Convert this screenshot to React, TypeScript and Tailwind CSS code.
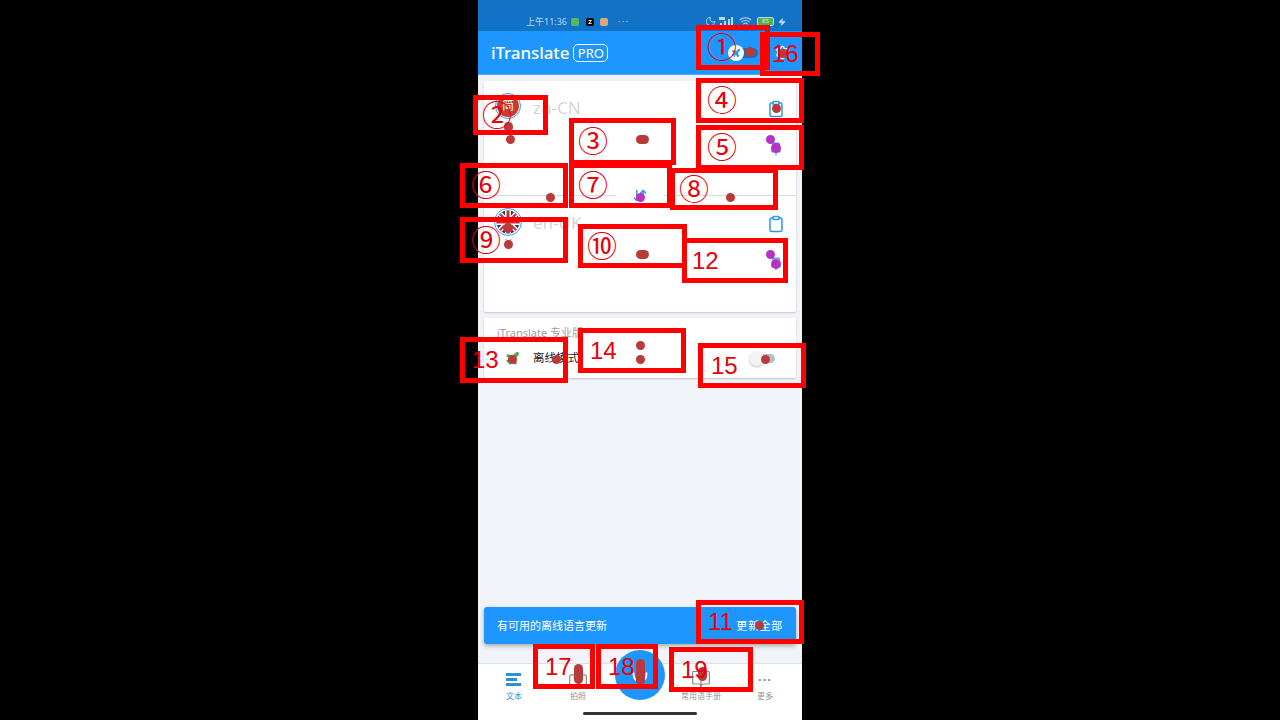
import { Camera, Clipboard, BookOpen, Mic, Plane, Settings, Moon, Wifi, Zap, ArrowDownUp, Pin, ChevronDown } from "lucide-react";

const font = { fontFamily: "'Noto Sans', 'Noto Sans CJK SC', sans-serif" };

// annotation boxes drawn over the screenshot
const boxes = [
  { label: "①", x: 696, y: 25, w: 74, h: 45, dx: 11, size: 30 },
  { label: "16", x: 760, y: 32, w: 60, h: 44, dx: 12, size: 24 },
  { label: "②", x: 473, y: 95, w: 75, h: 40, dx: 9, size: 30 },
  { label: "③", x: 569, y: 118, w: 107, h: 47, dx: 9, size: 30 },
  { label: "④", x: 696, y: 78, w: 108, h: 45, dx: 11, size: 30 },
  { label: "⑤", x: 696, y: 125, w: 108, h: 45, dx: 11, size: 30 },
  { label: "⑥", x: 460, y: 163, w: 108, h: 45, dx: 11, size: 30 },
  { label: "⑦", x: 569, y: 163, w: 103, h: 45, dx: 9, size: 30 },
  { label: "⑧", x: 670, y: 168, w: 108, h: 42, dx: 9, size: 30 },
  { label: "⑨", x: 460, y: 217, w: 108, h: 46, dx: 11, size: 30 },
  { label: "⑩", x: 578, y: 224, w: 109, h: 44, dx: 9, size: 30 },
  { label: "12", x: 682, y: 238, w: 106, h: 45, dx: 10, size: 24 },
  { label: "13", x: 460, y: 337, w: 108, h: 46, dx: 12, size: 24 },
  { label: "14", x: 578, y: 328, w: 108, h: 45, dx: 12, size: 24 },
  { label: "15", x: 698, y: 343, w: 108, h: 45, dx: 13, size: 24 },
  { label: "11", x: 696, y: 600, w: 108, h: 44, dx: 12, size: 24 },
  { label: "17", x: 533, y: 644, w: 62, h: 45, dx: 12, size: 24 },
  { label: "18", x: 596, y: 644, w: 62, h: 45, dx: 12, size: 24 },
  { label: "19", x: 669, y: 647, w: 84, h: 45, dx: 12, size: 24 },
];

const dots = [
  { x: 750, y: 52, w: 10, h: 10, c: "#b83b3b" },
  { x: 783, y: 53, w: 10, h: 9, c: "#b83b3b" },
  { x: 508, y: 127, w: 9, h: 10, c: "#b83b3b" },
  { x: 510, y: 139, w: 9, h: 9, c: "#b83b3b" },
  { x: 642, y: 139, w: 13, h: 9, c: "#b83b3b" },
  { x: 776, y: 108, w: 9, h: 9, c: "#b83b3b" },
  { x: 770, y: 139, w: 9, h: 9, c: "#b833c4" },
  { x: 776, y: 148, w: 10, h: 10, c: "#b833c4" },
  { x: 550, y: 197, w: 9, h: 9, c: "#b83b3b" },
  { x: 640, y: 197, w: 9, h: 9, c: "#b833c4" },
  { x: 730, y: 197, w: 9, h: 9, c: "#b83b3b" },
  { x: 508, y: 228, w: 10, h: 10, c: "#b83b3b" },
  { x: 508, y: 244, w: 9, h: 9, c: "#b83b3b" },
  { x: 642, y: 254, w: 13, h: 9, c: "#b83b3b" },
  { x: 770, y: 254, w: 9, h: 9, c: "#b833c4" },
  { x: 776, y: 264, w: 10, h: 10, c: "#b833c4" },
  { x: 512, y: 359, w: 9, h: 9, c: "#b83b3b" },
  { x: 556, y: 359, w: 9, h: 9, c: "#b83b3b" },
  { x: 640, y: 345, w: 9, h: 9, c: "#b83b3b" },
  { x: 640, y: 359, w: 9, h: 9, c: "#b83b3b" },
  { x: 765, y: 359, w: 9, h: 9, c: "#b83b3b" },
  { x: 759, y: 625, w: 9, h: 9, c: "#b83b3b" },
  { x: 578, y: 674, w: 9, h: 20, c: "#b83b3b" },
  { x: 640, y: 672, w: 9, h: 26, c: "#b83b3b" },
  { x: 702, y: 674, w: 9, h: 14, c: "#b83b3b" },
];

function ChinaBadge() {
  return (
    <div className="w-[26px] h-[26px] rounded-full border border-[#3b9be8] flex items-center justify-center">
      <div className="w-[22px] h-[22px] rounded-full bg-[#c63d30] text-white text-[12px] leading-[22px] text-center">简</div>
    </div>
  );
}

function UkFlag() {
  return (
    <svg width="28" height="28" viewBox="0 0 28 28">
      <defs>
        <clipPath id="uk"><circle cx="14" cy="14" r="11.5" /></clipPath>
      </defs>
      <circle cx="14" cy="14" r="13.5" fill="#fff" stroke="#3b9be8" />
      <g clipPath="url(#uk)">
        <rect width="28" height="28" fill="#27356e" />
        <path d="M0 0L28 28M28 0L0 28" stroke="#fff" strokeWidth="5" />
        <path d="M0 0L28 28M28 0L0 28" stroke="#c8303a" strokeWidth="2" />
        <path d="M14 0V28M0 14H28" stroke="#fff" strokeWidth="6" />
        <path d="M14 0V28M0 14H28" stroke="#c8303a" strokeWidth="3" />
      </g>
    </svg>
  );
}

function LangRow({ code, flag }: { code: string; flag: React.ReactNode }) {
  return (
    <div className="flex items-start justify-between pl-[10px] pr-[11px] pt-[12px]">
      <div className="flex items-start gap-[11px]">
        <div className="flex flex-col items-center w-[28px]">
          {flag}
          <ChevronDown size={11} strokeWidth={2} className="text-[#2f95e6] -mt-[1px]" />
        </div>
        <span className="text-[17px] leading-[28px] mt-[1px] text-[#d3d6da]">{code}</span>
      </div>
      <div className="flex flex-col items-center">
        <Clipboard size={18} strokeWidth={2} className="text-[#2f95e6] mt-[7px]" />
        <Pin size={14} strokeWidth={2} className="text-[#2f95e6] mt-[24px]" />
      </div>
    </div>
  );
}

function NavItem({ label, width, active, children }: { label: string; width: number; active?: boolean; children: React.ReactNode }) {
  return (
    <div className="flex flex-col items-center" style={{ width }}>
      <div className="h-[22px] flex items-center justify-center">{children}</div>
      <span className={`text-[8px] leading-[12px] ${active ? "text-[#2f8fd8]" : "text-[#8f959b]"}`}>{label}</span>
    </div>
  );
}

export default function App() {
  return (
    <div className="relative w-[1280px] h-[720px] bg-black overflow-hidden" style={font}>
      <div className="w-[324px] h-[720px] ml-[478px] flex flex-col bg-[#f0f3f7]">
        {/* Status bar */}
        <div className="h-[31px] bg-[#1272c6] flex items-end justify-between pl-[48px] pr-[16px] pb-[3px] text-[#bcd8f0]">
          <div className="flex items-center text-[9px] leading-[12px]">
            <span>上午11:36</span>
            <span className="ml-[4px] w-[8px] h-[8px] rounded-[2px] bg-[#58b85c]" />
            <span className="ml-[7px] w-[8px] h-[8px] rounded-[2px] bg-black text-white text-[6px] leading-[8px] text-center font-bold">Z</span>
            <span className="ml-[6px] w-[8px] h-[8px] rounded-[2px] bg-[#d8a878]" />
            <span className="ml-[10px] tracking-[1.5px]">···</span>
          </div>
          <div className="flex items-center gap-[2px]">
            <Moon size={11} />
            <svg width="16" height="10" viewBox="0 0 16 10" fill="currentColor">
              <rect x="1" y="0" width="6" height="3" />
              <rect x="2" y="6" width="2" height="4" />
              <rect x="6" y="4" width="2" height="6" />
              <rect x="10" y="2" width="2" height="8" />
              <rect x="13" y="0" width="2" height="10" />
            </svg>
            <Wifi size={13} className="ml-[3px]" />
            <span className="ml-[3px] w-[17px] h-[9px] rounded-[2px] border border-[#bcd8f0] bg-[#56b04f] text-[6px] leading-[7px] text-center text-[#d5f0c8]">85</span>
            <Zap size={8} fill="currentColor" className="ml-[2px]" />
          </div>
        </div>

        {/* Header */}
        <div className="h-[44px] bg-[#1e96ff] flex items-center pl-[13px] pr-[12px] border-b border-[#4aa8f5]">
          <span className="text-white text-[17px] font-medium tracking-[-0.1px]">iTranslate</span>
          <span className="ml-[4px] w-[35px] h-[18px] text-center border border-white rounded-[5px] text-white text-[13px] leading-[16px]">PRO</span>
          <div className="ml-auto relative w-[22px] h-[10px] mr-[17px] rounded-full bg-[#1570c0]">
            <div className="absolute -left-[8px] -top-[3px] w-[16px] h-[16px] rounded-full bg-white flex items-center justify-center">
              <Plane size={10} className="text-[#1e96ff]" fill="currentColor" />
            </div>
          </div>
          <Settings size={15} className="text-white" />
        </div>

        {/* Content */}
        <div className="flex-1 px-[6px] pt-[6px] flex flex-col">
          <div className="h-[231px] bg-white rounded-[2px] shadow-[0_1px_2px_rgba(0,0,0,0.2)] flex flex-col">
            <div className="h-[115px] border-b border-[#d9dcdf] relative">
              <LangRow code="zh-CN" flag={<ChinaBadge />} />
              <div className="absolute left-1/2 -translate-x-1/2 -bottom-[8px] bg-white px-[16px]">
                <ArrowDownUp size={15} strokeWidth={2.4} className="text-[#2f95e6]" />
              </div>
            </div>
            <LangRow code="en-UK" flag={<UkFlag />} />
          </div>

          <div className="h-[60px] mt-[6px] bg-white rounded-[2px] shadow-[0_1px_2px_rgba(0,0,0,0.2)] px-[13px] pt-[7px]">
            <div className="text-[11px] leading-[16px] text-[#9aa0a6]">iTranslate 专业版</div>
            <div className="flex items-center mt-[9px]">
              <Plane size={15} className="ml-[8px] text-[#47b04b]" fill="currentColor" />
              <span className="ml-[13px] text-[11.5px] leading-[16px] text-[#222]">离线模式</span>
              <div className="ml-auto mr-[8px] relative w-[24px] h-[9px] rounded-full bg-[#b9bcbf]">
                <div className="absolute -left-[2px] -top-[3px] w-[15px] h-[15px] rounded-full bg-[#f3f3f3] shadow-[0_1px_2px_rgba(0,0,0,0.25)]" />
              </div>
            </div>
          </div>

          {/* Update banner */}
          <div className="mt-auto mb-[19px] h-[37px] bg-[#1e96ff] rounded-[3px] shadow-[0_2px_4px_rgba(0,0,0,0.3)] flex items-center justify-between pl-[13px] pr-[13px] pt-[2px] text-white text-[11px]">
            <span>有可用的离线语言更新</span>
            <span className="tracking-[0.7px]">更新全部</span>
          </div>
        </div>

        {/* Bottom nav */}
        <div className="relative h-[57px] bg-white border-t border-[#dfe2e5] flex pt-[4px]">
          <NavItem label="文本" width={72} active>
            <svg width="16" height="13" viewBox="0 0 16 13" fill="#2f8fd8">
              <rect width="15" height="3" />
              <rect y="5" width="11" height="3" />
              <rect y="10" width="15" height="3" />
            </svg>
          </NavItem>
          <NavItem label="拍照" width={56}><Camera size={20} strokeWidth={1.4} className="text-[#85898d]" /></NavItem>
          <div className="w-[68px]" />
          <NavItem label="常用语手册" width={54}><BookOpen size={20} strokeWidth={1.4} className="text-[#85898d]" /></NavItem>
          <NavItem label="更多" width={74}>
            <span className="text-[#85898d] text-[13px] font-bold tracking-[1px] leading-[13px]">···</span>
          </NavItem>
          <div className="absolute left-[137px] -top-[14px] w-[50px] h-[50px] rounded-full bg-[#1e96ff] flex items-center justify-center">
            <Mic size={22} className="text-white" />
          </div>
          <div className="absolute left-[105px] bottom-[5px] w-[114px] h-[3px] rounded-full bg-[#333]" />
        </div>
      </div>

      {/* Annotation dots */}
      {dots.map((d, i) => (
        <div
          key={i}
          className="absolute rounded-full"
          style={{ left: d.x - d.w / 2, top: d.y - d.h / 2, width: d.w, height: d.h, backgroundColor: d.c }}
        />
      ))}

      {/* Annotation boxes */}
      {boxes.map((b) => (
        <div
          key={b.label}
          className="absolute border-[5px] border-[#ff0000] flex items-center text-[#e8000b]"
          style={{ left: b.x, top: b.y, width: b.w, height: b.h, paddingLeft: b.dx - 5, fontSize: b.size, fontFamily: "'Liberation Sans', 'Noto Sans CJK JP', sans-serif" }}
        >
          {b.label}
        </div>
      ))}
    </div>
  );
}
